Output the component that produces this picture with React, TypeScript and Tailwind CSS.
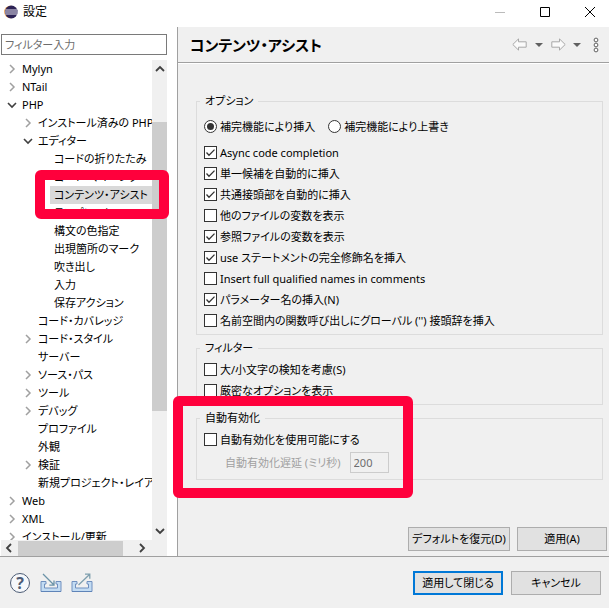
import { useState } from "react";
import type { ReactNode } from "react";

interface TreeRow {
  label: string;
  level: number;
  state?: "open" | "closed";
}

const treeRows: TreeRow[] = [
  { label: "Mylyn", level: 0, state: "closed" },
  { label: "NTail", level: 0, state: "closed" },
  { label: "PHP", level: 0, state: "open" },
  { label: "インストール済みの PHP", level: 1, state: "closed" },
  { label: "エディター", level: 1, state: "open" },
  { label: "コードの折りたたみ", level: 2 },
  { label: "コード・マイニング", level: 2 },
  { label: "コンテンツ・アシスト", level: 2 },
  { label: "テンプレート", level: 2 },
  { label: "構文の色指定", level: 2 },
  { label: "出現箇所のマーク", level: 2 },
  { label: "吹き出し", level: 2 },
  { label: "入力", level: 2 },
  { label: "保存アクション", level: 2 },
  { label: "コード・カバレッジ", level: 1 },
  { label: "コード・スタイル", level: 1, state: "closed" },
  { label: "サーバー", level: 1 },
  { label: "ソース・パス", level: 1, state: "closed" },
  { label: "ツール", level: 1, state: "closed" },
  { label: "デバッグ", level: 1, state: "closed" },
  { label: "プロファイル", level: 1 },
  { label: "外観", level: 1 },
  { label: "検証", level: 1, state: "closed" },
  { label: "新規プロジェクト・レイアウト", level: 1 },
  { label: "Web", level: 0, state: "closed" },
  { label: "XML", level: 0, state: "closed" },
  { label: "インストール/更新", level: 0, state: "closed" },
];

const levelPadding = ["pl-1", "pl-5", "pl-9"];

const options = [
  { label: "Async code completion", checked: true },
  { label: "単一候補を自動的に挿入", checked: true },
  { label: "共通接頭部を自動的に挿入", checked: true },
  { label: "他のファイルの変数を表示", checked: false },
  { label: "参照ファイルの変数を表示", checked: true },
  { label: "use ステートメントの完全修飾名を挿入", checked: true },
  { label: "Insert full qualified names in comments", checked: false },
  { label: "パラメーター名の挿入(N)", checked: true },
  { label: "名前空間内の関数呼び出しにグローバル ('') 接頭辞を挿入", checked: false },
];

const Chevron = ({ dir, className }: { dir: "up" | "down" | "left" | "right"; className: string }) => {
  const points = {
    up: "1,7 5,3 9,7",
    down: "1,3 5,7 9,3",
    left: "7,1 3,5 7,9",
    right: "3,1 7,5 3,9",
  };
  return (
    <svg viewBox="0 0 10 10" className={className} fill="none" stroke="currentColor" aria-hidden="true">
      <polyline points={points[dir]} />
    </svg>
  );
};

const Checkbox = ({ label, checked = false }: { label: string; checked?: boolean }) => (
  <label className="flex h-[21px] items-center gap-[3px] whitespace-nowrap">
    <span className="grid size-[13px] shrink-0">
      <input
        type="checkbox"
        defaultChecked={checked}
        className="peer col-start-1 row-start-1 size-[13px] appearance-none border border-[#333] bg-white"
      />
      <svg
        viewBox="0 0 13 13"
        className="pointer-events-none invisible col-start-1 row-start-1 size-[13px] peer-checked:visible"
        fill="none"
        stroke="#333"
        strokeWidth="1.3"
        aria-hidden="true"
      >
        <path d="M2.5 6.5 5 9.2 10.5 3.6" />
      </svg>
    </span>
    {label}
  </label>
);

const Radio = ({ label, checked = false }: { label: string; checked?: boolean }) => (
  <label className="flex h-[21px] items-center gap-[3px] whitespace-nowrap">
    <span className="grid size-[13px] shrink-0 place-items-center">
      <input
        type="radio"
        name="completion"
        defaultChecked={checked}
        className="peer col-start-1 row-start-1 size-[13px] appearance-none rounded-full border border-[#333] bg-white"
      />
      <span className="pointer-events-none invisible col-start-1 row-start-1 size-[7px] rounded-full bg-[#333] peer-checked:visible" />
    </span>
    {label}
  </label>
);

const Group = ({ title, children }: { title: string; children: ReactNode }) => (
  <fieldset className="min-w-0 border border-[#dcdcdc] px-[7px]">
    <legend className="-ml-1 px-[5px] leading-[18px]">{title}</legend>
    {children}
  </fieldset>
);

const PushButton = ({ children, className }: { children: ReactNode; className: string }) => (
  <button type="button" className={`flex h-6 items-center justify-center whitespace-nowrap bg-[#e1e1e1] ${className}`}>
    {children}
  </button>
);

const TitleBar = () => (
  <header className="flex h-[27px] shrink-0 items-center bg-white pl-1">
    <svg viewBox="0 0 14 14" className="mb-1 size-[14px]" aria-hidden="true">
      <circle cx="6.4" cy="7" r="6.2" fill="#f0993a" />
      <circle cx="7.3" cy="7" r="6.4" fill="#2c2255" />
      <path d="M1.2 5h12.1M.8 7h12.9M1.2 9h12.1" stroke="#e8e6f2" strokeWidth="1" />
    </svg>
    <h1 className="mb-1 ml-[5px] text-xs">設定</h1>
    <div className="mb-1 ml-auto flex">
      <button type="button" aria-label="最小化" disabled className="grid w-[45px] place-items-center text-[#bbb]">
        <svg viewBox="0 0 10 10" className="size-[10px]" stroke="currentColor"><path d="M0 5.5h10" /></svg>
      </button>
      <button type="button" aria-label="最大化" className="grid w-[45px] place-items-center">
        <svg viewBox="0 0 10 10" className="size-[10px]" fill="none" stroke="currentColor"><path d="M.5.5h9v9h-9z" /></svg>
      </button>
      <button type="button" aria-label="閉じる" className="grid w-[42px] place-items-center pl-1">
        <svg viewBox="0 0 10 10" className="size-[10px]" fill="none" stroke="currentColor"><path d="M0 0 10 10M10 0 0 10" /></svg>
      </button>
    </div>
  </header>
);

const PreferenceTree = () => {
  const [selected, setSelected] = useState("コンテンツ・アシスト");

  return (
    <nav className="relative flex w-[178px] shrink-0 flex-col border-r border-[#a0a0a0] bg-white pl-px pr-[10px] pt-[7px]">
      <input
        type="text"
        placeholder="フィルター入力"
        aria-label="フィルター入力"
        className="h-[21px] w-full shrink-0 border border-[#7a7a7a] bg-white px-[3px] placeholder:text-[#6d6d6d]"
      />
      <div className="mt-[5px] flex min-h-0 flex-1">
        <ul role="tree" className="h-0 min-h-full min-w-0 flex-1 overflow-hidden">
          {treeRows.map((row) => (
            <li
              key={row.label}
              role="treeitem"
              aria-selected={row.label === selected}
              aria-expanded={row.state ? row.state === "open" : undefined}
              onClick={() => setSelected(row.label)}
              className={`flex h-[18px] items-center whitespace-nowrap ${levelPadding[row.level]}`}
            >
              <span className="w-[13px] shrink-0">
                {row.state === "open" && <Chevron dir="down" className="ml-[2px] size-[10px] stroke-[1.6] text-[#404040]" />}
                {row.state === "closed" && <Chevron dir="right" className="ml-[2px] size-[10px] stroke-[1.5] text-[#a0a0a0]" />}
              </span>
              <span className={`px-1 leading-[18px] ${row.label === selected ? "bg-[#d9d9d9]" : ""}`}>
                {row.label}
              </span>
            </li>
          ))}
        </ul>
        {/* vertical scrollbar */}
        <div className="flex w-[15px] shrink-0 flex-col items-center bg-[#f0f0f0] py-1 text-[#404040]">
          <Chevron dir="up" className="size-[10px] stroke-[1.8]" />
          <div className="flex w-full flex-1 flex-col py-1">
            <div className="flex-[44]" />
            <div className="flex-[289] bg-[#cdcdcd]" />
            <div className="flex-[111]" />
          </div>
          <Chevron dir="down" className="size-[10px] stroke-[1.8]" />
        </div>
      </div>
      {/* horizontal scrollbar */}
      <div className="flex h-[16px] shrink-0 items-center bg-[#f0f0f0] pr-[20px] pl-[3px] text-[#404040]">
        <Chevron dir="left" className="size-[10px] stroke-[1.8]" />
        <div className="mr-[14px] ml-1 h-[15px] flex-1 bg-[#cdcdcd]" />
        <Chevron dir="right" className="size-[10px] stroke-[1.8]" />
      </div>
      {/* callout around the selected page */}
      <div className="pointer-events-none absolute top-[143px] left-[35px] z-10 h-[49px] w-[134px] rounded-md border-10 border-[#ff003c]" />
    </nav>
  );
};

const HistoryToolbar = () => (
  <div className="flex items-center text-[#606060]">
    <button type="button" aria-label="戻る" className="text-[#a8a8a8]">
      <svg viewBox="0 0 15 13" className="h-[13px] w-[15px]" fill="#fafafa" stroke="currentColor">
        <path d="M.8 6.5 6.5.9v2.9h7.7v5.4H6.5v2.9z" strokeLinejoin="round" />
      </svg>
    </button>
    <button type="button" aria-label="戻る履歴" className="ml-2">
      <svg viewBox="0 0 8 4" className="h-1 w-2" fill="currentColor"><path d="M0 0h8L4 4z" /></svg>
    </button>
    <button type="button" aria-label="進む" className="ml-2 text-[#a8a8a8]">
      <svg viewBox="0 0 15 13" className="h-[13px] w-[15px]" fill="#fafafa" stroke="currentColor">
        <path d="M14.2 6.5 8.5.9v2.9H.8v5.4h7.7v2.9z" strokeLinejoin="round" />
      </svg>
    </button>
    <button type="button" aria-label="進む履歴" className="ml-[7px]">
      <svg viewBox="0 0 8 4" className="h-1 w-2" fill="currentColor"><path d="M0 0h8L4 4z" /></svg>
    </button>
    <button type="button" aria-label="メニュー" className="ml-3">
      <svg viewBox="0 0 6 16" className="h-4 w-[6px]" fill="#fff" stroke="currentColor">
        <circle cx="3" cy="3" r="1.9" />
        <circle cx="3" cy="8" r="1.9" />
        <circle cx="3" cy="13" r="1.9" />
      </svg>
    </button>
  </div>
);

const ContentAssistPage = () => (
  <main className="flex min-w-0 flex-1 flex-col">
    <div className="flex h-9 shrink-0 items-center justify-between border-b border-[#a0a0a0] pr-[10px] pl-3">
      <h2 className="text-[15px] font-bold">コンテンツ・アシスト</h2>
      <HistoryToolbar />
    </div>
    <div className="flex flex-1 flex-col gap-1 border-t border-white pt-[28px] pr-[6px] pl-[18px]">
      <Group title="オプション">
        <div className="flex gap-[13px] pt-[6px] pb-[5px]">
          <Radio label="補完機能により挿入" checked />
          <Radio label="補完機能により上書き" />
        </div>
        {options.map((option) => (
          <Checkbox key={option.label} label={option.label} checked={option.checked} />
        ))}
        <div className="h-[3px]" />
      </Group>
      <Group title="フィルター">
        <div className="pt-[2px] pb-[3px]">
          <Checkbox label="大/小文字の検知を考慮(S)" />
          <Checkbox label="厳密なオプションを表示" />
        </div>
      </Group>
      <div className="relative">
        <Group title="自動有効化">
          <div className="pt-[2px] pb-[6px]">
            <Checkbox label="自動有効化を使用可能にする" />
            <div className="mt-[2px] flex items-center gap-[9px] pl-[21px] text-[#a0a0a0]">
              <label htmlFor="delay" className="whitespace-nowrap">自動有効化遅延 (ミリ秒)</label>
              <input
                id="delay"
                type="text"
                defaultValue="200"
                disabled
                className="h-[21px] w-[39px] border border-[#cccccc] px-[3px] text-[#6d6d6d]"
              />
            </div>
          </div>
        </Group>
        {/* callout around the auto activation settings */}
        <div className="pointer-events-none absolute -top-[13px] -left-[23px] z-10 h-[102px] w-[240px] rounded-md border-10 border-[#ff003c]" />
      </div>
    </div>
    <div className="flex shrink-0 justify-end gap-[7px] pr-[2px] pb-[5px]">
      <PushButton className="w-[102px] border border-[#adadad]">デフォルトを復元(D)</PushButton>
      <PushButton className="w-[90px] border border-[#adadad]">適用(A)</PushButton>
    </div>
  </main>
);

const Tray = () => (
  <>
    <path d="M1 8.5h5v2.5H4.5v4h13v-4H16V8.5h5v10H1z" fill="#c3dcf3" stroke="#7090bf" />
    <path d="M1 18.5h20" stroke="#5f84b8" />
  </>
);

const Footer = () => (
  <footer className="flex h-[52px] shrink-0 items-center border-t border-[#a0a0a0] pr-2 pl-[10px]">
    <button type="button" aria-label="ヘルプ" className="grid size-5 place-items-center rounded-full border border-[#4d5c75] bg-[#f6f8fb] text-base leading-none font-bold text-[#4d5c75]">
      ?
    </button>
    <button type="button" aria-label="インポート" className="ml-[10px]">
      <svg viewBox="0 0 22 20" className="h-5 w-[22px]" fill="none">
        <Tray />
        <path d="M3 1 14 12M14 7.5v4.7H9.3" stroke="#6b93a8" strokeWidth="1.3" />
      </svg>
    </button>
    <button type="button" aria-label="エクスポート" className="ml-[9px]">
      <svg viewBox="0 0 22 20" className="h-5 w-[22px]" fill="none">
        <Tray />
        <path d="M7.5 12 18.5 1.5M14 1.2h4.8v4.6" stroke="#7f9fae" strokeWidth="1.3" />
      </svg>
    </button>
    <div className="ml-auto flex gap-2">
      <PushButton className="w-[90px] border-2 border-[#0078d7]">適用して閉じる</PushButton>
      <PushButton className="w-[90px] border border-[#adadad]">キャンセル</PushButton>
    </div>
  </footer>
);

export default function App() {
  return (
    <div className="flex h-screen min-h-[560px] flex-col overflow-hidden bg-[#f0f0f0] font-['Noto_Sans','Noto_Sans_CJK_JP',sans-serif] text-[11px] leading-4 text-black [font-feature-settings:'palt']">
      <TitleBar />
      <div className="flex min-h-0 flex-1">
        <PreferenceTree />
        <ContentAssistPage />
      </div>
      <Footer />
    </div>
  );
}
